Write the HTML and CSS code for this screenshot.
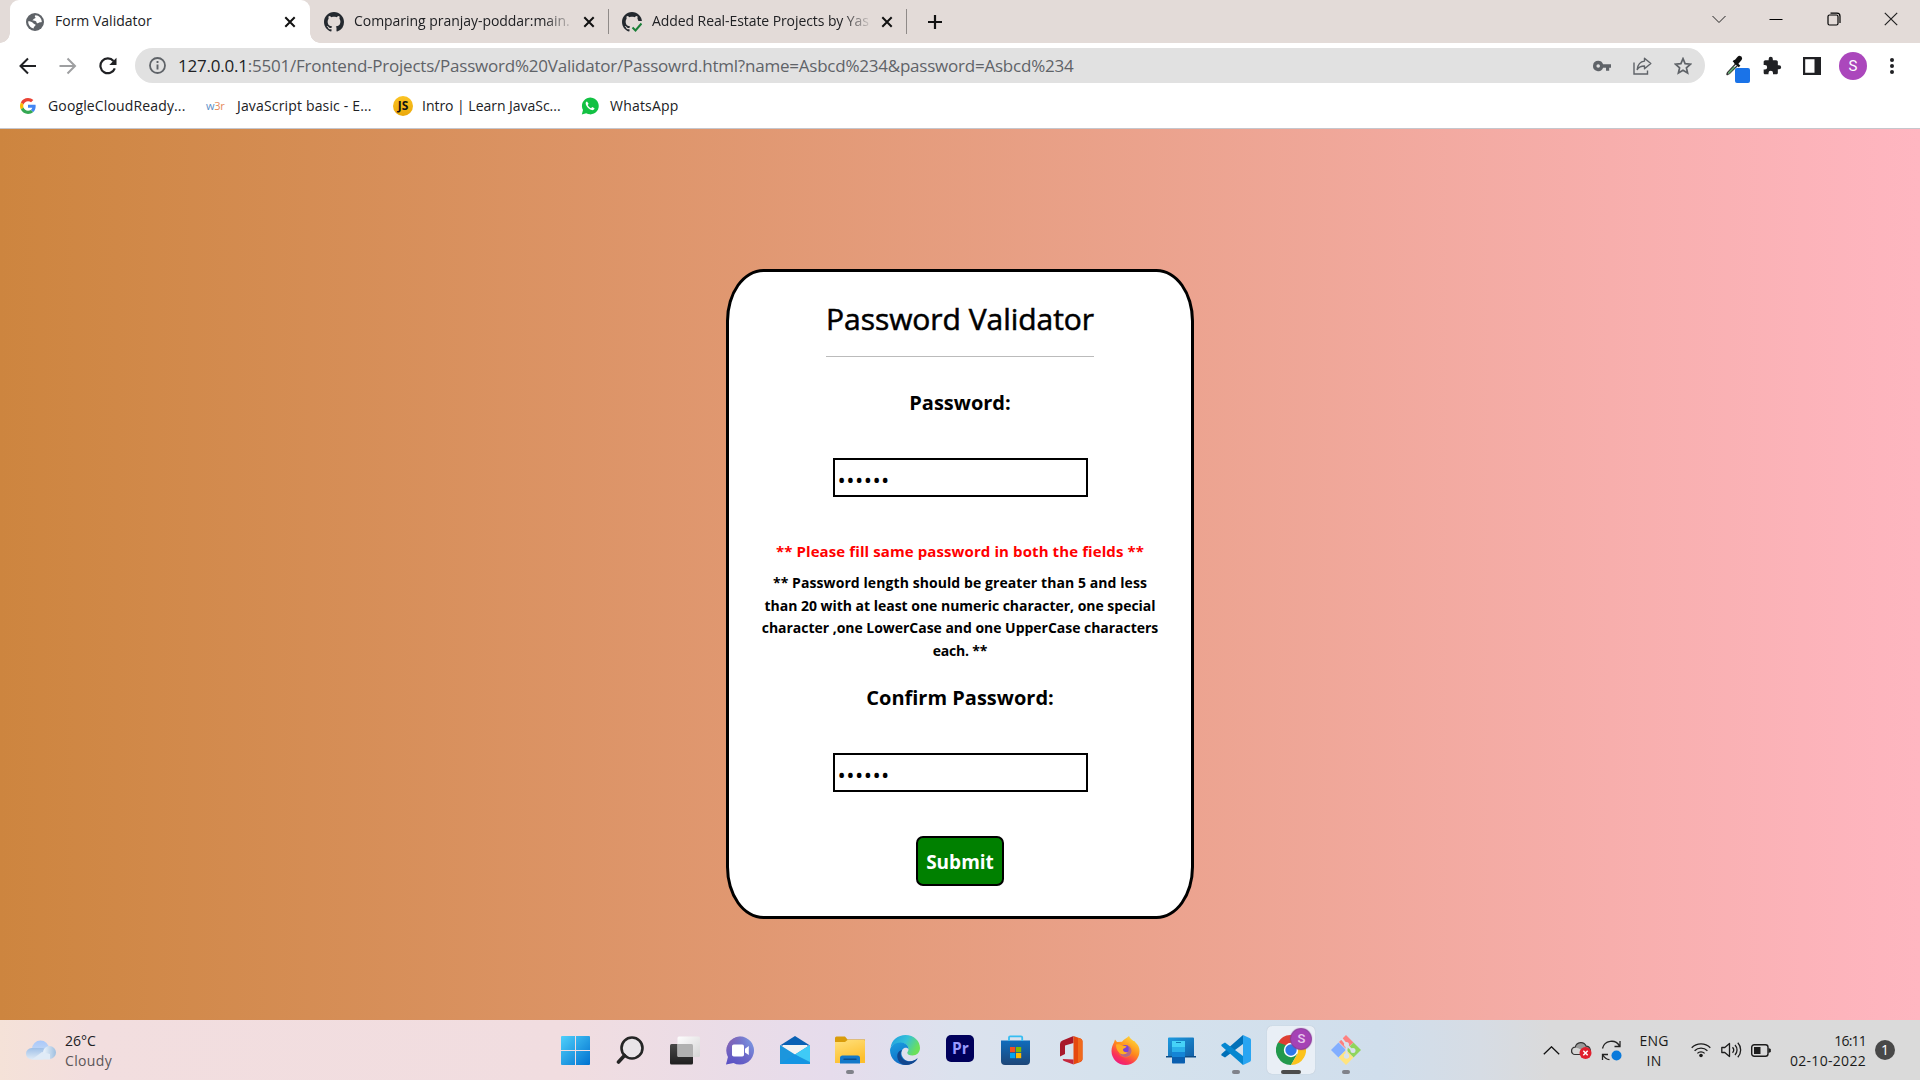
FILE: index.html
```html
<!DOCTYPE html>
<html lang="en">
<head>
<meta charset="utf-8">
<title>Form Validator</title>
<link rel="stylesheet" href="styles.css">
</head>
<body>
<svg class="defs" width="0" height="0">
  <symbol id="close" viewBox="0 0 12 12"><path d="M1.3 1.3l9.4 9.4M10.7 1.3l-9.4 9.4" stroke="#111" stroke-width="2" fill="none"/></symbol>
  <symbol id="github" viewBox="0 0 16 16"><path fill="#24292f" d="M8 0C3.58 0 0 3.58 0 8c0 3.54 2.29 6.53 5.47 7.59.4.07.55-.17.55-.38 0-.19-.01-.82-.01-1.49-2.01.37-2.53-.49-2.69-.94-.09-.23-.48-.94-.82-1.13-.28-.15-.68-.52-.01-.53.63-.01 1.08.58 1.23.82.72 1.21 1.87.87 2.33.66.07-.52.28-.87.51-1.07-1.78-.2-3.64-.89-3.64-3.95 0-.87.31-1.59.82-2.15-.08-.2-.36-1.02.08-2.12 0 0 .67-.21 2.2.82.64-.18 1.32-.27 2-.27s1.36.09 2 .27c1.53-1.04 2.2-.82 2.2-.82.44 1.1.16 1.92.08 2.12.51.56.82 1.27.82 2.15 0 3.07-1.87 3.75-3.65 3.95.29.25.54.73.54 1.48 0 1.07-.01 1.93-.01 2.2 0 .21.15.46.55.38A8 8 0 0 0 16 8c0-4.42-3.58-8-8-8z"/></symbol>
</svg>

<header class="tabs">
  <div class="tab active">
    <svg class="fav" width="18" height="18" viewBox="0 0 18 18"><circle cx="9" cy="9" r="9" fill="#5f6368"/><path d="M9.500 2.200c-1 .6-.8 1.600-.1 2 .4.9-.5 1.300-1.400 1.500-.6.700-1.500 1.100-1.400 1.900 1.200.3 2.700 0 3.600.8.500.9.300 1.700 1.400 1.900 1 .1 1.300-.9 2.200-1 .9-.2 1.700-.2 2-.4C15.600 5 13 2.300 9.500 2.200zM2.200 8.300c-.1 3.400 1.900 6.300 5.300 7.300.5-.7.100-1.500.8-2 .9-.3 1.200-1.100 1.200-2-.8-.6-1.900-.6-2.500-1.600C6.300 8.800 4 8.300 2.200 8.300z" fill="#fff"/></svg>
    <span class="tab-title t1">Form Validator</span>
    <svg class="x" width="12" height="12"><use href="#close"/></svg>
  </div>
  <div class="tab second">
    <svg class="fav" width="20" height="20"><use href="#github"/></svg>
    <span class="tab-title t2">Comparing pranjay-poddar:main.</span>
    <svg class="x" width="12" height="12"><use href="#close"/></svg>
  </div>
  <div class="tab third">
    <svg class="fav" width="20" height="20" viewBox="0 0 20 20"><use href="#github" width="20" height="20"/><path d="M9 17l6-8h5v11H10z" fill="#e3dbd8"/><path d="M10.500 15.500l3 3 6-7" stroke="#1a7f37" stroke-width="2" fill="none"/></svg>
    <span class="tab-title t3">Added Real-Estate Projects by Yas</span>
    <svg class="x" width="12" height="12"><use href="#close"/></svg>
  </div>
  <svg class="plus" width="16" height="16" viewBox="0 0 16 16"><path d="M8 1v14M1 8h14" stroke="#111" stroke-width="2.200"/></svg>
  <div class="win">
    <svg width="14" height="14" viewBox="0 0 14 14"><path d="M.5 4l6.500 6.500L13.500 4" stroke="#222" fill="none"/></svg>
    <svg width="14" height="14" viewBox="0 0 14 14"><path d="M.5 7.500h13" stroke="#000"/></svg>
    <svg width="14" height="14" viewBox="0 0 14 14"><rect x="1" y="3" width="10" height="10" rx="1.500" fill="none" stroke="#000" stroke-width="1.200"/><path d="M3.500 1.200h6.500a3 3 0 0 1 3 3V11" fill="none" stroke="#000" stroke-width="1.200"/></svg>
    <svg width="14" height="14" viewBox="0 0 14 14"><path d="M.8.8l12.400 12.400M13.200.8L.8 13.200" stroke="#222" stroke-width="1.200"/></svg>
  </div>
</header>

<nav class="toolbar">
  <svg class="nav" width="18" height="18" viewBox="0 0 18 18"><path d="M17 9H1.500M9 1.500L1.500 9l7.500 7.500" stroke="#202124" stroke-width="2" fill="none"/></svg>
  <svg class="nav" width="18" height="18" viewBox="0 0 18 18"><path d="M.5 9H16M8.500 1.500L16 9l-7.500 7.500" stroke="#9e9fa1" stroke-width="2" fill="none"/></svg>
  <svg class="nav" width="18" height="18" viewBox="0 0 18 18"><path d="M15.800 11.300A7.400 7.400 0 1 1 14.500 4" stroke="#202124" stroke-width="2.200" fill="none"/><path d="M17.500.8v7.200h-7.200z" fill="#202124"/></svg>
  <div class="omnibox">
    <svg class="info" width="17" height="17" viewBox="0 0 17 17"><circle cx="8.500" cy="8.500" r="7.500" fill="none" stroke="#5f6368" stroke-width="1.800"/><path d="M8.500 7.500v5M8.500 4v2" stroke="#5f6368" stroke-width="1.900"/></svg>
    <span class="url"><b>127.0.0.1</b>:5501/Frontend-Projects/Password%20Validator/Passowrd.html?name=Asbcd%234&amp;password=Asbcd%234</span>
    <div class="omni-icons">
      <svg width="18" height="12" viewBox="0 0 18 12"><path fill="#5f6368" fill-rule="evenodd" d="M5.200.8a5.200 5.200 0 1 0 4.900 7h2.900v3h3.200v-3H18V4.200h-7.900A5.200 5.200 0 0 0 5.200.8zm0 3.400a1.800 1.800 0 1 1 0 3.600 1.800 1.800 0 0 1 0-3.600z"/></svg>
      <svg width="19" height="18" viewBox="0 0 19 18"><path d="M1 5.500V17h13.500v-3.500" stroke="#5f6368" stroke-width="1.400" fill="none"/><path d="M11.500 1.200l6.300 5.300-6.300 5.300V9C8 9 5.800 10 4.200 12.500 4.700 8 7 4.600 11.500 4.100z" fill="none" stroke="#5f6368" stroke-width="1.400" stroke-linejoin="round"/></svg>
      <svg width="18" height="18" viewBox="0 0 18 18"><path d="M9 1.700l2.100 5 5.400.5-4.100 3.600 1.200 5.300L9 13.300l-4.600 2.800 1.200-5.300-4.100-3.600 5.400-.5z" fill="none" stroke="#5f6368" stroke-width="1.700"/></svg>
    </div>
  </div>
  <svg class="picker" width="25" height="28" viewBox="0 0 25 28"><path d="M11 8.500l-8.500 9-.8 2.300M13 10l-8.500 8.500-2.800 1.300" stroke="#333" stroke-width="1.300" fill="none"/><path d="M9.500 12l-6 6.300" stroke="#5aa267" stroke-width="1.800"/><path d="M8.500 5.500l6 6" stroke="#111" stroke-width="2.400"/><path d="M11.500 7l3-3.500" stroke="#111" stroke-width="5" stroke-linecap="round"/><rect x="10" y="13" width="15" height="15" rx="2" fill="#1a73e8"/></svg>
  <svg class="puzzle" width="20" height="20" viewBox="0 0 24 24"><path fill="#202124" d="M20.500 11H19V7c0-1.100-.9-2-2-2h-4V3.500a2.500 2.500 0 0 0-5 0V5H4c-1.100 0-2 .9-2 2v3.800h1.500a2.700 2.700 0 0 1 0 5.400H2V20c0 1.100.9 2 2 2h3.800v-1.500a2.700 2.700 0 0 1 5.400 0V22H17c1.100 0 2-.9 2-2v-4h1.500a2.500 2.500 0 0 0 0-5z"/></svg>
  <svg class="panel" width="18" height="18" viewBox="0 0 18 18"><path fill="#202124" fill-rule="evenodd" d="M0 0h18v18H0zM2.200 2.200h9.300v13.600H2.200z"/></svg>
  <span class="avatar">S</span>
  <svg class="dots" width="4" height="18" viewBox="0 0 4 18"><g fill="#202124"><circle cx="2" cy="3" r="2"/><circle cx="2" cy="9" r="2"/><circle cx="2" cy="15" r="2"/></g></svg>
</nav>

<nav class="bookmarks">
  <div class="bm b1"><svg width="16" height="16" viewBox="0 0 48 48"><path fill="#EA4335" d="M24 9.500c3.540 0 6.710 1.220 9.210 3.600l6.850-6.850C35.900 2.380 30.470 0 24 0 14.620 0 6.510 5.380 2.560 13.220l7.980 6.190C12.430 13.720 17.740 9.500 24 9.500z"/><path fill="#4285F4" d="M46.980 24.550c0-1.570-.15-3.090-.38-4.550H24v9.020h12.940c-.58 2.960-2.260 5.480-4.780 7.180l7.730 6c4.510-4.180 7.090-10.360 7.090-17.650z"/><path fill="#FBBC05" d="M10.530 28.590A14.500 14.500 0 0 1 9.770 24c0-1.600.27-3.140.76-4.590l-7.980-6.190A23.900 23.900 0 0 0 0 24c0 3.880.92 7.540 2.560 10.780z"/><path fill="#34A853" d="M24 48c6.480 0 11.930-2.130 15.890-5.810l-7.730-6c-2.150 1.450-4.920 2.300-8.160 2.300-6.260 0-11.570-4.220-13.470-9.910l-7.980 6.190C6.510 42.620 14.620 48 24 48z"/></svg><span>GoogleCloudReady...</span></div>
  <div class="bm b2"><i class="w3r">w<em>3r</em></i><span>JavaScript basic - E...</span></div>
  <div class="bm b3"><i class="js">JS</i><span>Intro | Learn JavaSc...</span></div>
  <div class="bm b4"><svg width="18" height="18" viewBox="0 0 18 18"><path d="M.8 17.500l1.200-4.400A8.400 8.400 0 1 1 5.200 16.300z" fill="#12c143"/><path d="M6 4.500c-.5 0-1.500.8-1.300 2.200.4 2.700 3.400 5.900 6.300 6.400 1.400.2 2.500-.8 2.500-1.900l-2.300-1.200-1.100 1.200C8.700 10.800 7.300 9.500 6.700 8l.9-1.200z" fill="#fff"/></svg><span>WhatsApp</span></div>
</nav>

<main class="page">
  <form class="card">
    <h1>Password Validator</h1>
    <label class="lbl pw">Password:</label>
    <input class="field" type="password" value="Asbcd4">
    <p class="error">** Please fill same password in both the fields **</p>
    <p class="rules"><span class="r1">** Password length should be greater than 5 and less</span><br><span class="r2">than 20 with at least one numeric character, one special</span><br><span class="r3">character ,one LowerCase and one UpperCase characters</span><br><span class="r4">each. **</span></p>
    <label class="lbl cpw">Confirm Password:</label>
    <input class="field" type="password" value="Asbcd4">
    <button class="submit" type="button">Submit</button>
  </form>
</main>

<footer class="taskbar">
  <div class="weather">
    <svg width="30" height="20" viewBox="0 0 30 20"><defs><linearGradient id="cl" x2="0" y2="1"><stop stop-color="#a9c8fa"/><stop offset="1" stop-color="#cfe0f2"/></linearGradient><linearGradient id="cr"><stop stop-color="#eef5fc"/><stop offset="1" stop-color="#9fbfe0"/></linearGradient><linearGradient id="cb" x2="0" y2="1"><stop stop-color="#9fc0e8"/><stop offset="1" stop-color="#e0ebf6"/></linearGradient></defs><circle cx="14.500" cy="9" r="8.500" fill="url(#cl)"/><rect x="0" y="8" width="22" height="11.500" rx="5.700" fill="url(#cb)"/><circle cx="23.500" cy="12.500" r="6.500" fill="url(#cr)"/><path d="M6 19.500h18V14l-8-2z" fill="#e0ebf7"/></svg>
    <div class="wtext"><span class="temp">26°C</span><span class="sky">Cloudy</span></div>
  </div>
  <div class="apps">
    <div class="app"><svg width="29" height="29" viewBox="0 0 29 29"><defs><linearGradient id="wn" x2="1" y2="1"><stop stop-color="#4fd0fb"/><stop offset="1" stop-color="#0071cf"/></linearGradient></defs><path fill="url(#wn)" d="M1 0h13v14H0V1a1 1 0 0 1 1-1zM15 0h13a1 1 0 0 1 1 1v13H15zM0 15h14v14H1a1 1 0 0 1-1-1zM15 15h14v13a1 1 0 0 1-1 1H15z"/></svg></div>
    <div class="app"><svg width="28" height="29" viewBox="0 0 28 29"><circle cx="16" cy="12" r="10.500" fill="#e9e4e8" stroke="#252525" stroke-width="2.600"/><path d="M8.500 19.500L2.500 26" stroke="#252525" stroke-width="3.600" stroke-linecap="round"/></svg></div>
    <div class="app"><svg width="30" height="29" viewBox="0 0 30 29"><defs><linearGradient id="tk" x2="0" y2="1"><stop stop-color="#484848"/><stop offset="1" stop-color="#1f1f1f"/></linearGradient><linearGradient id="tw" x2="1" y2="1"><stop stop-color="#fff"/><stop offset="1" stop-color="#d5d5d5"/></linearGradient></defs><rect x="0" y="8" width="23" height="20.500" rx="1.500" fill="url(#tk)"/><rect x="7.500" y=".5" width="22.500" height="20.500" rx="1.500" fill="url(#tw)" opacity=".95"/><path d="M7.500 8H21.500a1.500 1.500 0 0 1 1.500 1.500V21H8.500a1 1 0 0 1-1-1z" fill="#b1b1b1"/></svg></div>
    <div class="app"><svg width="30" height="29" viewBox="0 0 30 29"><defs><linearGradient id="ch" x1="1" x2="0" y2="1"><stop stop-color="#7ea4e8"/><stop offset=".5" stop-color="#6c68c8"/><stop offset="1" stop-color="#554bc4"/></linearGradient><linearGradient id="ch2" x2=".6" y2=".5"><stop stop-color="#9a62a4"/><stop offset="1" stop-color="#6c68c8" stop-opacity="0"/></linearGradient></defs><path d="M15 .5a14 14 0 1 1-6.500 26.400L1 28.500l2-7.500A14 14 0 0 1 15 .5z" fill="url(#ch)"/><path d="M15 .5a14 14 0 1 1-6.500 26.400L1 28.500l2-7.500A14 14 0 0 1 15 .5z" fill="url(#ch2)"/><rect x="7" y="8.500" width="12" height="12" rx="1.800" fill="#fff"/><path d="M20 12.800l3.800-2.800v9L20 16.500z" fill="#fff"/></svg></div>
    <div class="app"><svg width="30" height="28" viewBox="0 0 30 28"><path d="M15 0l15 9.500H0z" fill="#0a61b4"/><path d="M3 9h24v9H3z" fill="#f3f3f3"/><path d="M0 9l15 9.500L30 9v19H0z" fill="#1c96dd"/><path d="M30 9v17L15 18.500z" fill="#3fcaf6"/><path d="M0 28l15-9.500L30 28z" fill="#1595e3"/></svg></div>
    <div class="app run"><svg width="30" height="28" viewBox="0 0 30 28"><defs><linearGradient id="fo" x2=".4" y2="1"><stop stop-color="#ffe07c"/><stop offset="1" stop-color="#fdbf2d"/></linearGradient></defs><path d="M0 2a1.500 1.500 0 0 1 1.500-1.500H10l2.500 3H30V8H0z" fill="#d99c0b"/><path d="M0 6h10l2.500-2H29a1 1 0 0 1 1 1v22H0z" fill="url(#fo)"/><path d="M5 27.500V22a2.500 2.500 0 0 1 2.500-2.500h15A2.500 2.500 0 0 1 25 22v5.500z" fill="#1378c9"/><path d="M9 23.200h12" stroke="#0a4d8c" stroke-width="1.400" stroke-linecap="round"/></svg></div>
    <div class="app"><svg width="30" height="30" viewBox="0 0 30 30"><defs><linearGradient id="e1" x2="1" y2=".4"><stop stop-color="#1c9ce0"/><stop offset=".55" stop-color="#35c1d8"/><stop offset="1" stop-color="#6be05a"/></linearGradient><linearGradient id="e2" x2=".5" y2="1"><stop stop-color="#1aa0e0"/><stop offset="1" stop-color="#0f68c4"/></linearGradient></defs><path d="M.5 13C1.500 5 8 0 15.500 0 24 0 30 6 30 13c0 4.500-3.200 7.500-7.500 7.500-3.500 0-5.200-1.500-5.200-2.800 0-1 1.200-1.300 1.200-3.500 0-3.500-3-6.200-7.500-6.200C5.500 8 1.500 10.500.5 13z" fill="url(#e1)"/><path d="M0 15C.5 10.500 5 7.500 10.500 7.500c5 0 8 3 8 6.700-1.500-2-4.300-2-6 .3-2.500 3.500-.5 9.500 4.500 11.300 3.500 1.200 7.500.2 10.500-2C24.800 27.800 20.500 30 15.500 30 6.500 30 0 23.500 0 15z" fill="url(#e2)"/><path d="M12 15c-3 4.500-.2 10 5 11.300 3.800 1 8-.5 10.500-3.200.3 1-3.500 6.900-11.500 6.900-6 0-9.800-6-8.500-11 .8-2.200 2.500-3.500 4.500-4z" fill="#12478f"/></svg></div>
    <div class="app"><i class="pr">Pr</i></div>
    <div class="app"><svg width="29" height="30" viewBox="0 0 29 30"><defs><linearGradient id="st" x2="0" y2="1"><stop stop-color="#0f6dbd"/><stop offset="1" stop-color="#1d4678"/></linearGradient></defs><path d="M0 5.500h29V26a4 4 0 0 1-4 4H4a4 4 0 0 1-4-4z" fill="url(#st)"/><path d="M8 6V2.500A1.200 1.200 0 0 1 9.200 1.300H20a1.200 1.200 0 0 1 1.200 1.200V6" fill="none" stroke="#35bdf2" stroke-width="1.800"/><path d="M9 12h5.200v5.200H9z" fill="#f25022"/><path d="M15 12h5.200v5.200H15z" fill="#7fba00"/><path d="M9 18h5.200v5.200H9z" fill="#00a4ef"/><path d="M15 18h5.200v5.200H15z" fill="#ffb900"/></svg></div>
    <div class="app"><svg width="24" height="29" viewBox="0 0 24 29"><path d="M14.500 0L3.500 4.500A4 4 0 0 0 1 8v12.500L6 18V9.500L14.500 7z" fill="#a8172a"/><path d="M14.500 0l7 2.500A3 3 0 0 1 23.500 5v18.500a3 3 0 0 1-2 2.500l-7 2.500z" fill="#e6490f"/><path d="M4 23l10.500.5v5L5 25c-1-.4-1.700-1.500-1-2z" fill="#c5263c"/><path d="M19 2l2.500.6A3 3 0 0 1 23.500 5v18.500L19 27z" fill="#f06a1c"/></svg></div>
    <div class="app"><svg width="29" height="29" viewBox="0 0 29 29"><defs><linearGradient id="ff" x1=".8" x2=".2" y2="1"><stop stop-color="#ffe13d"/><stop offset=".45" stop-color="#ff8a1c"/><stop offset=".75" stop-color="#fb3455"/><stop offset="1" stop-color="#e9168a"/></linearGradient></defs><path d="M18 0c1 2.500 3 3.500 4.500 5 1.200-.3 1.300.5 2.500 2 2 1.500 3.500 4.500 3.500 8A14 14 0 0 1 .5 15c0-4 1.500-6.500 2.500-8.500L4 3.500 6 6l5-.3C13 3 15.500 2.500 18 0z" fill="url(#ff)"/><circle cx="14.500" cy="15" r="6" fill="#7c42d8"/><path d="M5 8.500c3-.8 5 0 6.500 1.300l4 .5c-.5 2-3.500 2-3.500 3.500 0 2 2.500 3.200 5 2.200-1.500 3-6.500 3.500-9 .5C5.500 14 5 11 5 8.500z" fill="#ffad23"/><path d="M15.500 7c3 .5 5.500 3 6 6.500.5 5-3.500 8.500-7.500 8-3.500-.3-6-2.500-6.500-5 2.500 3.200 7.500 2.700 9.500-.5 1.500-2.700.5-6-1.500-9z" fill="#ff9a1e" opacity=".45"/></svg></div>
    <div class="app"><svg width="30" height="28" viewBox="0 0 30 28"><defs><linearGradient id="pl" x2="1" y2="1"><stop stop-color="#1e9be0"/><stop offset="1" stop-color="#1261a8"/></linearGradient></defs><path d="M2 2.500a1 1 0 0 1 1-1h24a1 1 0 0 1 1 1V20H2z" fill="url(#pl)"/><path d="M0 20h30v1.500H0z" fill="#0d4c86"/><rect x="6" y="5" width="13" height="22.500" rx=".8" fill="#0a5fb0"/><path d="M6 5h13v6H6z" fill="#46d2f7"/><path d="M6 11h13v5H6z" fill="#2bb0ea"/><path d="M6 16h13v5H6z" fill="#1484d6"/><path d="M10 6.500h5" stroke="#127ab4"/></svg></div>
    <div class="app run"><svg width="30" height="30" viewBox="0 0 30 30"><path d="M22 0v9L4 22.500 1 20.800a1.300 1.300 0 0 1 0-2.300z" fill="#0070b8"/><path d="M22 30v-9L4 7.500 1 9.200a1.300 1.300 0 0 0 0 2.300z" fill="#0587d0"/><path d="M22 0l7 3.300a1.800 1.800 0 0 1 1 1.600v20.200a1.800 1.800 0 0 1-1 1.600L22 30z" fill="#29a5f2"/></svg></div>
    <div class="app current"><svg width="30" height="30" viewBox="0 0 30 30"><path d="M15 15L2 7.500a15 15 0 0 1 26 0z" fill="#de3f33"/><path d="M2 7.500A15 15 0 0 0 15 30l6.500-11.200L15 15z" fill="#22994d"/><path d="M28 7.500A15 15 0 0 1 15 30l6.500-11.200L19 8z" fill="#fcc31d"/><path d="M2 7.500l6.500 11.200 4-7.700z" fill="#22994d"/><path d="M28 7.500H15l-2 4z" fill="#de3f33"/><circle cx="15" cy="15" r="7.200" fill="#fff"/><circle cx="15" cy="15" r="5.700" fill="#2f78ea"/></svg><span class="profile">S</span></div>
    <div class="app run"><svg width="30" height="30" viewBox="0 0 30 30"><path d="M15 0l7.500 7.500L15 14 8 7z" fill="#fd8180"/><path d="M7.500 7.500L15 15l-7.500 7.500L0 15z" fill="#82aeff"/><path d="M22.500 7.500L30 15l-7.500 7.500L15 15z" fill="#90d55c"/><path d="M15 15l7.500 7.500L15 30l-7.500-7.500z" fill="#ffe480"/><path d="M10.500 3.500l5 6v11.500M15.500 10l6 5.500" stroke="#d8e2ed" stroke-width="2" fill="none"/><g fill="#d8e2ed"><circle cx="15.500" cy="9.500" r="2.500"/><circle cx="15.500" cy="21" r="2.700"/><circle cx="22" cy="15.500" r="2.500"/></g></svg></div>
  </div>
  <div class="tray">
    <svg class="up" width="17" height="9" viewBox="0 0 17 9"><path d="M.8 8.300l7.700-7.500 7.700 7.500" stroke="#111" stroke-width="1.300" fill="none"/></svg>
    <svg class="cloud" width="21" height="18" viewBox="0 0 21 18"><path d="M4 13.500a3.700 3.700 0 0 1 .3-7.400 5.700 5.700 0 0 1 10.800-1 4.500 4.500 0 0 1 2 8.400z" fill="#9a9a9a" stroke="#333" stroke-width="1.200"/><path d="M4 13a3.200 3.200 0 0 1 1-6.300c3 0 6 2 8 6.300z" fill="#d6d6d6"/><circle cx="14.500" cy="12" r="6" fill="#e01f2d"/><path d="M12.300 9.800l4.400 4.400M16.700 9.800l-4.400 4.400" stroke="#fff" stroke-width="1.500"/></svg>
    <svg class="sync" width="21" height="21" viewBox="0 0 21 21"><path d="M1.500 8.500A9.200 9.200 0 0 1 18.500 6M19 1v5.500h-5.500M8.500 19.700A9 9 0 0 1 2 15.200M1.500 20v-5.500H7" fill="none" stroke="#222" stroke-width="1.300"/><circle cx="15.500" cy="15.500" r="5" fill="#0a7adb"/></svg>
    <div class="lang"><span>ENG</span><span>IN</span></div>
    <svg class="wifi" width="20" height="16" viewBox="0 0 20 16"><g fill="none" stroke="#1c1c1c" stroke-width="1.300"><path d="M.7 5.800a13 13 0 0 1 18.600 0M3.600 8.700a9 9 0 0 1 12.800 0M6.400 11.400a5.100 5.100 0 0 1 7.200 0"/></g><circle cx="10" cy="13.500" r="1.800" fill="#1c1c1c"/></svg>
    <svg class="vol" width="21" height="16" viewBox="0 0 21 16"><g fill="none" stroke="#1c1c1c" stroke-width="1.300" stroke-linejoin="round"><path d="M.8 5.500h3L8.500 1.500v13L3.800 10.500h-3zM11.500 5.200a4.200 4.200 0 0 1 0 5.600M14 3a7.200 7.200 0 0 1 0 10M16.800.8a10.500 10.500 0 0 1 0 14.400"/></g></svg>
    <svg class="bat" width="20" height="13" viewBox="0 0 20 13"><rect x=".7" y=".7" width="16.300" height="11.600" rx="2.500" fill="none" stroke="#1c1c1c" stroke-width="1.400"/><path d="M3 3h6.500v7H3zM17.500 4l2.300 1v3l-2.300 1z" fill="#1c1c1c"/></svg>
    <div class="clock"><span class="time">16:11</span><span class="date">02-10-2022</span></div>
    <span class="badge">1</span>
  </div>
</footer>
</body>
</html>
```
FILE: styles.css
```css
* { box-sizing: border-box; margin: 0; padding: 0; }
body {
  width: 1920px; height: 1080px; overflow: hidden;
  display: flex; flex-direction: column;
  font-family: "Open Sans", "Noto Sans", sans-serif;
  font-size: 14px; color: #202124; white-space: nowrap;
}
svg { display: block; flex: none; }
.defs { position: absolute; }
i, em { font-style: normal; }

/* tab strip */
.tabs { height: 43px; background: #e3dbd8; display: flex; align-items: center; flex: none; }
.tab { height: 43px; display: flex; align-items: center; flex: none; }
.tab.active { width: 300px; margin-left: 10px; padding-left: 16px; background: #fff; border-radius: 9px 9px 0 0; position: relative; }
.tab.active::before, .tab.active::after { content: ""; position: absolute; bottom: 0; width: 10px; height: 10px; }
.tab.active::before { left: -10px; background: radial-gradient(circle at 0 0, #e3dbd8 9.5px, #fff 10px); }
.tab.active::after { right: -10px; background: radial-gradient(circle at 100% 0, #e3dbd8 9.5px, #fff 10px); }
.tab.second { width: 299px; padding-left: 14px; }
.tab.third { width: 298px; padding-left: 13px; }
.tab.second, .tab.third { background: linear-gradient(#8f8a88, #8f8a88) right 9px / 1px 25px no-repeat; }
.tab-title { line-height: 20px; padding-bottom: 1px; }
.t1 { width: 229px; margin-left: 11px; }
.t2, .t3 { width: 219px; margin-right: 10px; margin-left: 10px; -webkit-mask: linear-gradient(90deg, #000 190px, transparent 221px); mask: linear-gradient(90deg, #000 190px, transparent 221px); }
.t2 { letter-spacing: -.04px; }
.t3 { letter-spacing: -.08px; }
.plus { margin-left: 20px; }
.win { display: flex; gap: 43.300px; margin-left: auto; margin-right: 22px; padding-bottom: 6px; }

/* address bar */
.toolbar { height: 45px; background: #fff; display: flex; align-items: center; flex: none; padding-left: 19px; }
.nav { margin-right: 22px; }
.nav:nth-child(3) { margin-right: 18px; }
.omnibox { width: 1570px; height: 35px; border-radius: 18px; background: #e1e1e1; display: flex; align-items: center; padding-left: 14px; flex: none; }
.url { margin-left: 12px; font-size: 17px; color: #5f6368; line-height: 24px; letter-spacing: -.22px; }
.url b { font-weight: 400; color: #202124; }
.omni-icons { display: flex; align-items: center; gap: 22px; margin-left: auto; margin-right: 13px; }
.picker { margin-left: 20px; margin-top: 7px; }
.puzzle { margin-left: 12px; }
.panel { margin-left: 21px; }
.avatar { width: 28px; height: 28px; margin-left: 18px; border-radius: 50%; background: #ab47bc; color: #fff; font: 15px/28px Roboto, sans-serif; text-align: center; }
.dots { margin-left: 23px; }

/* bookmarks bar */
.bookmarks { height: 41px; background: #fff; border-bottom: 1px solid #c6c6cc; display: flex; align-items: center; flex: none; padding: 0 0 5px 20px; }
.bm { display: flex; align-items: center; flex: none; }
.b1 { width: 186px; gap: 12px; letter-spacing: .14px; }
.b2 { width: 187px; gap: 12px; letter-spacing: .16px; }
.b3 { width: 188px; gap: 9px; letter-spacing: -.03px; }
.b4 { gap: 11px; letter-spacing: .2px; }
.w3r { width: 19px; font-size: 11px; letter-spacing: -.3px; color: #5b8fc7; }
.w3r em { color: #e58a5a; }
.js { width: 20px; height: 20px; border-radius: 50%; background: linear-gradient(#fcc424, #eaa80a); color: #111; font-size: 12px; font-weight: 700; line-height: 20px; text-align: center; }

/* page */
.page { flex: 1; background: linear-gradient(to right, #cd853f, #ffb6c1); display: flex; justify-content: center; align-items: flex-start; padding-top: 140px; }
.card { width: 468px; height: 650px; border: 3px solid #000; border-radius: 8%; background: #fff; color: #000; display: flex; flex-direction: column; align-items: center; padding-top: 24px; }
h1 { font-size: 30px; font-weight: 500; line-height: 45px; padding-bottom: 15px; border-bottom: 1px solid #bbb; width: 268px; text-align: center; letter-spacing: -.04px; -webkit-text-stroke: .55px #000; }
.lbl { font-size: 20px; font-weight: 700; line-height: 28px; }
.pw { margin-top: 32px; }
.cpw { margin-top: 21px; }
.field { width: 255px; height: 39px; margin-top: 41px; border: 2px solid #000; padding: 3px 3px 0; font: 22px "Open Sans", sans-serif; letter-spacing: .45px; outline: none; }
.error { margin-top: 43px; line-height: 22px; font-size: 15px; font-weight: 700; color: #f00; letter-spacing: .1px; }
.rules { margin-top: 10px; font-size: 14px; font-weight: 700; line-height: 22.670px; text-align: center; }
.r1 { letter-spacing: .08px; }
.r2 { letter-spacing: -.02px; }
.r3 { letter-spacing: -.03px; }
.r4 { letter-spacing: -.2px; }
.submit { width: 88px; height: 50px; margin-top: 44px; padding-top: 2px; border: 2px solid #000; border-radius: 7px; background: #008000; color: #fff; font: 700 19px "Open Sans", sans-serif; }

/* taskbar */
.taskbar { height: 60px; flex: none; display: flex; align-items: center; background: linear-gradient(90deg, #f5e2d8 0, #f2dedf 90px, #f1dde0 560px, #e6dcec 830px, #dbe2ee 960px, #d5e2ed 1120px, #d0deec 1380px, #d6dce4 1480px, #dadadb 1550px, #dadada 100%); }
.weather { width: 547.500px; padding-left: 26px; display: flex; align-items: center; gap: 9px; flex: none; }
.wtext, .lang, .clock { display: flex; flex-direction: column; line-height: 20px; padding-top: 1px; }
.sky { color: #5c5658; letter-spacing: .35px; }
.apps { display: grid; grid-template-columns: repeat(15, 55.070px); width: 826px; height: 60px; flex: none; }
.app { display: flex; align-items: center; justify-content: center; position: relative; }
.run::after { content: ""; position: absolute; bottom: 6px; width: 8px; height: 4px; border-radius: 2px; background: #80828a; }
.current::before { content: ""; position: absolute; inset: 6px 3.500px; border-radius: 5px; background: #e9eff6; box-shadow: 0 0 1px #aab4c0; }
.current::after { content: ""; position: absolute; bottom: 6px; width: 20px; height: 4px; border-radius: 2px; background: #4c4c4c; }
.current svg { position: relative; }
.profile { position: absolute; top: 9px; right: 7px; width: 20px; height: 20px; border-radius: 50%; background: #a542b5; box-shadow: 0 0 1px 1px #8b3a9a; color: #e8c9ee; font: 500 13px/20px Roboto, sans-serif; text-align: center; }
.pr { width: 28px; height: 27px; border-radius: 5px; margin-top: -3px; background: #00005b; color: #9999ff; font-size: 15.500px; font-weight: 700; line-height: 26px; text-align: center; }
.tray { display: flex; align-items: center; color: #1a1a1a; flex: 1; }
.up { margin-left: 169px; }
.cloud { margin-left: 11px; }
.sync { margin-left: 9px; }
.lang { margin-left: 17.500px; width: 30px; align-items: center; letter-spacing: .2px; }
.wifi { margin-left: 22px; }
.vol { margin-left: 9.500px; }
.bat { margin-left: 9.500px; }
.clock { width: 95px; align-items: flex-end; }
.time { letter-spacing: -.8px; }
.date { letter-spacing: .3px; }
.badge { width: 20px; height: 20px; margin-left: 9px; border-radius: 50%; background: #484848; color: #fff; font-size: 14px; line-height: 20px; text-align: center; }
```
